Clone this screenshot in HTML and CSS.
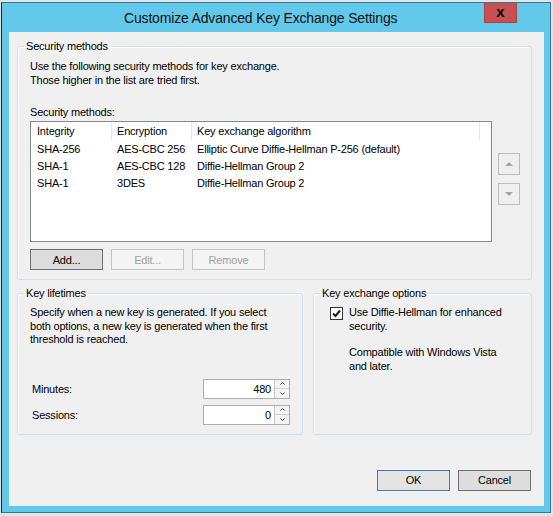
FILE: index.html
```html
<!DOCTYPE html>
<html lang="en">
<head>
<meta charset="utf-8">
<title>Customize Advanced Key Exchange Settings</title>
<link rel="stylesheet" href="styles.css">
</head>
<body>
<div class="window">
  <div class="titlebar">
    <span class="title">Customize Advanced Key Exchange Settings</span>
    <div class="close">x</div>
  </div>
  <div class="client">
    <fieldset class="group group-methods">
      <legend>Security methods</legend>
      <p class="intro">Use the following security methods for key exchange.<br>Those higher in the list are tried first.</p>
      <div class="list-label">Security methods:</div>
      <div class="list-row">
        <div class="listview">
          <div class="lv-row lv-head"><span>Integrity</span><span>Encryption</span><span>Key exchange algorithm</span><span></span></div>
          <div class="lv-row"><span>SHA-256</span><span>AES-CBC 256</span><span>Elliptic Curve Diffie-Hellman P-256 (default)</span><span></span></div>
          <div class="lv-row"><span>SHA-1</span><span>AES-CBC 128</span><span>Diffie-Hellman Group 2</span><span></span></div>
          <div class="lv-row"><span>SHA-1</span><span>3DES</span><span>Diffie-Hellman Group 2</span><span></span></div>
        </div>
        <div class="order-buttons">
          <div class="sq-btn"><svg width="8" height="4" viewBox="0 0 8 4"><polygon points="0,4 4,0 8,4" fill="#a5a5a5"/></svg></div>
          <div class="sq-btn"><svg width="8" height="4" viewBox="0 0 8 4"><polygon points="0,0 8,0 4,4" fill="#a5a5a5"/></svg></div>
        </div>
      </div>
      <div class="btn-row">
        <div class="btn">Add...</div>
        <div class="btn disabled">Edit...</div>
        <div class="btn disabled">Remove</div>
      </div>
    </fieldset>
    <div class="group-row">
      <fieldset class="group group-lifetimes">
        <legend>Key lifetimes</legend>
        <p class="para">Specify when a new key is generated. If you select<br>both options, a new key is generated when the first<br>threshold is reached.</p>
        <div class="fields">
          <div class="field-row">
            <span class="field-label">Minutes:</span>
            <div class="spin">
              <span class="spin-value">480</span>
              <div class="spin-btns">
                <span class="spin-half"><svg width="5" height="3" viewBox="0 0 5 3"><polyline points="0.5,2.5 2.5,0.5 4.5,2.5" fill="none" stroke="#333" stroke-width="1"/></svg></span>
                <span class="spin-half"><svg width="5" height="3" viewBox="0 0 5 3"><polyline points="0.5,0.5 2.5,2.5 4.5,0.5" fill="none" stroke="#333" stroke-width="1"/></svg></span>
              </div>
            </div>
          </div>
          <div class="field-row">
            <span class="field-label">Sessions:</span>
            <div class="spin">
              <span class="spin-value">0</span>
              <div class="spin-btns">
                <span class="spin-half"><svg width="5" height="3" viewBox="0 0 5 3"><polyline points="0.5,2.5 2.5,0.5 4.5,2.5" fill="none" stroke="#333" stroke-width="1"/></svg></span>
                <span class="spin-half"><svg width="5" height="3" viewBox="0 0 5 3"><polyline points="0.5,0.5 2.5,2.5 4.5,0.5" fill="none" stroke="#333" stroke-width="1"/></svg></span>
              </div>
            </div>
          </div>
        </div>
      </fieldset>
      <fieldset class="group group-options">
        <legend>Key exchange options</legend>
        <div class="check-row">
          <span class="checkbox"><svg width="11" height="11" viewBox="0 0 11 11"><polyline points="2,5.5 4.5,8 9,2.5" fill="none" stroke="#1a1a1a" stroke-width="2"/></svg></span>
          <div class="check-text">
            <p class="para">Use Diffie-Hellman for enhanced<br>security.</p>
            <p class="para note">Compatible with Windows Vista<br>and later.</p>
          </div>
        </div>
      </fieldset>
    </div>
    <div class="dialog-buttons">
      <div class="btn default">OK</div>
      <div class="btn">Cancel</div>
    </div>
  </div>
</div>
</body>
</html>
```

FILE: styles.css
```css
html, body {
  margin: 0;
  padding: 0;
}

body {
  width: 553px;
  height: 516px;
  overflow: hidden;
  background: #e4e4e4;
  font-family: "Liberation Sans", Arial, sans-serif;
  font-size: 11px;
  letter-spacing: -0.2px;
  color: #000;
}

.window {
  margin: 2px 0 0 1px;
  width: 550px;
  height: 511px;
  box-sizing: border-box;
  border: 1px solid #2f7897;
  border-left-color: #1d2b33;
  background: #63c9ea;
  padding: 0 6px 6px 7px;
  display: flex;
  flex-direction: column;
}

.titlebar {
  height: 29px;
  flex: none;
  display: flex;
  align-items: center;
}

.title {
  margin-left: 115px;
  font-size: 14px;
  letter-spacing: -0.17px;
  color: #111;
}

.close {
  align-self: flex-start;
  margin-left: auto;
  margin-right: 27px;
  width: 33px;
  height: 20px;
  box-sizing: border-box;
  background: #c75050;
  border: 1px solid #b04040;
  border-top: none;
  display: flex;
  align-items: center;
  justify-content: center;
  font-weight: bold;
  font-size: 15px;
  line-height: 15px;
  letter-spacing: 0;
  color: #000;
  padding-bottom: 3px;
}

.client {
  flex: 1;
  background: #f0f0f0;
  padding: 7px 12px 0 8px;
  display: flex;
  flex-direction: column;
}

.group {
  margin: 0;
  padding: 5px 12px 9px 12px;
  border: 1px solid #d5dfe5;
  border-radius: 3px;
  min-width: 0;
  box-shadow: inset 1px 1px 0 #fff;
}

.group legend {
  padding: 0 2px;
  margin-left: -6px;
  line-height: 15px;
}

.group-methods {
  padding-right: 11px;
}

p {
  margin: 0;
}

.intro {
  line-height: 14px;
}

.list-label {
  margin-top: 18px;
  line-height: 14px;
}

.list-row {
  margin-top: 2px;
  display: flex;
  align-items: flex-start;
}

.listview {
  width: 462px;
  height: 121px;
  box-sizing: border-box;
  border: 1px solid #828790;
  background: #fff;
  flex: none;
}

.lv-row {
  display: grid;
  grid-template-columns: 81px 80px 288px 1fr;
  height: 17px;
  line-height: 17px;
  white-space: nowrap;
}

.lv-row span {
  padding-left: 5px;
  overflow: hidden;
}

.lv-row span:first-child {
  padding-left: 6px;
}

.lv-head {
  height: 19px;
  line-height: 19px;
}

.lv-head span {
  border-right: 1px solid #e5e5e5;
}

.lv-head span:last-child {
  border-right: none;
}

.order-buttons {
  margin-left: 6px;
  margin-top: 32px;
  display: flex;
  flex-direction: column;
  gap: 8px;
}

.sq-btn {
  width: 22px;
  height: 22px;
  box-sizing: border-box;
  border: 1px solid #bcbcbc;
  background: #efefef;
  display: flex;
  align-items: center;
  justify-content: center;
}

.btn-row {
  margin-top: 7px;
  display: flex;
  gap: 8px;
}

.btn {
  width: 73px;
  height: 21px;
  box-sizing: border-box;
  border: 1px solid #707070;
  background: #dddddd;
  display: flex;
  align-items: center;
  justify-content: center;
  line-height: 14px;
}

.btn.disabled {
  border-color: #c4c4c4;
  background: #f4f4f4;
  color: #a0a0a0;
}

.btn.default {
  border-color: #3c7fb1;
  background: #e3e3e3;
}

.group-row {
  margin-top: 6px;
  display: flex;
  gap: 10px;
}

.group-lifetimes {
  width: 286px;
  box-sizing: border-box;
  flex: none;
}

.group-options {
  flex: 1;
  padding-left: 16px;
}

.group-options legend {
  margin-left: -10px;
}

.para {
  line-height: 13.5px;
}

.fields {
  margin-top: 32px;
  display: flex;
  flex-direction: column;
  gap: 6px;
}

.field-row {
  display: flex;
  align-items: center;
  height: 20px;
}

.field-label {
  width: 173px;
  box-sizing: border-box;
  padding-left: 2px;
  flex: none;
}

.spin {
  width: 87px;
  height: 20px;
  box-sizing: border-box;
  border: 1px solid #abadb3;
  background: #fff;
  display: flex;
}

.spin-value {
  flex: 1;
  text-align: right;
  padding-right: 3px;
  line-height: 18px;
}

.spin-btns {
  width: 14px;
  flex: none;
  display: flex;
  flex-direction: column;
  border-left: 1px solid #c8c8c8;
  background: #f3f3f3;
}

.spin-half {
  flex: 1;
  display: flex;
  align-items: center;
  justify-content: center;
}

.spin-half + .spin-half {
  border-top: 1px solid #d0d0d0;
}

.check-row {
  display: flex;
  align-items: flex-start;
}

.checkbox {
  width: 13px;
  height: 13px;
  box-sizing: border-box;
  border: 1px solid #333;
  background: #fff;
  margin-top: 1px;
  margin-right: 6px;
  flex: none;
  display: flex;
  align-items: center;
  justify-content: center;
}

.note {
  margin-top: 13px;
}

.dialog-buttons {
  margin-top: 35px;
  margin-right: 1px;
  display: flex;
  justify-content: flex-end;
  gap: 8px;
}
```
